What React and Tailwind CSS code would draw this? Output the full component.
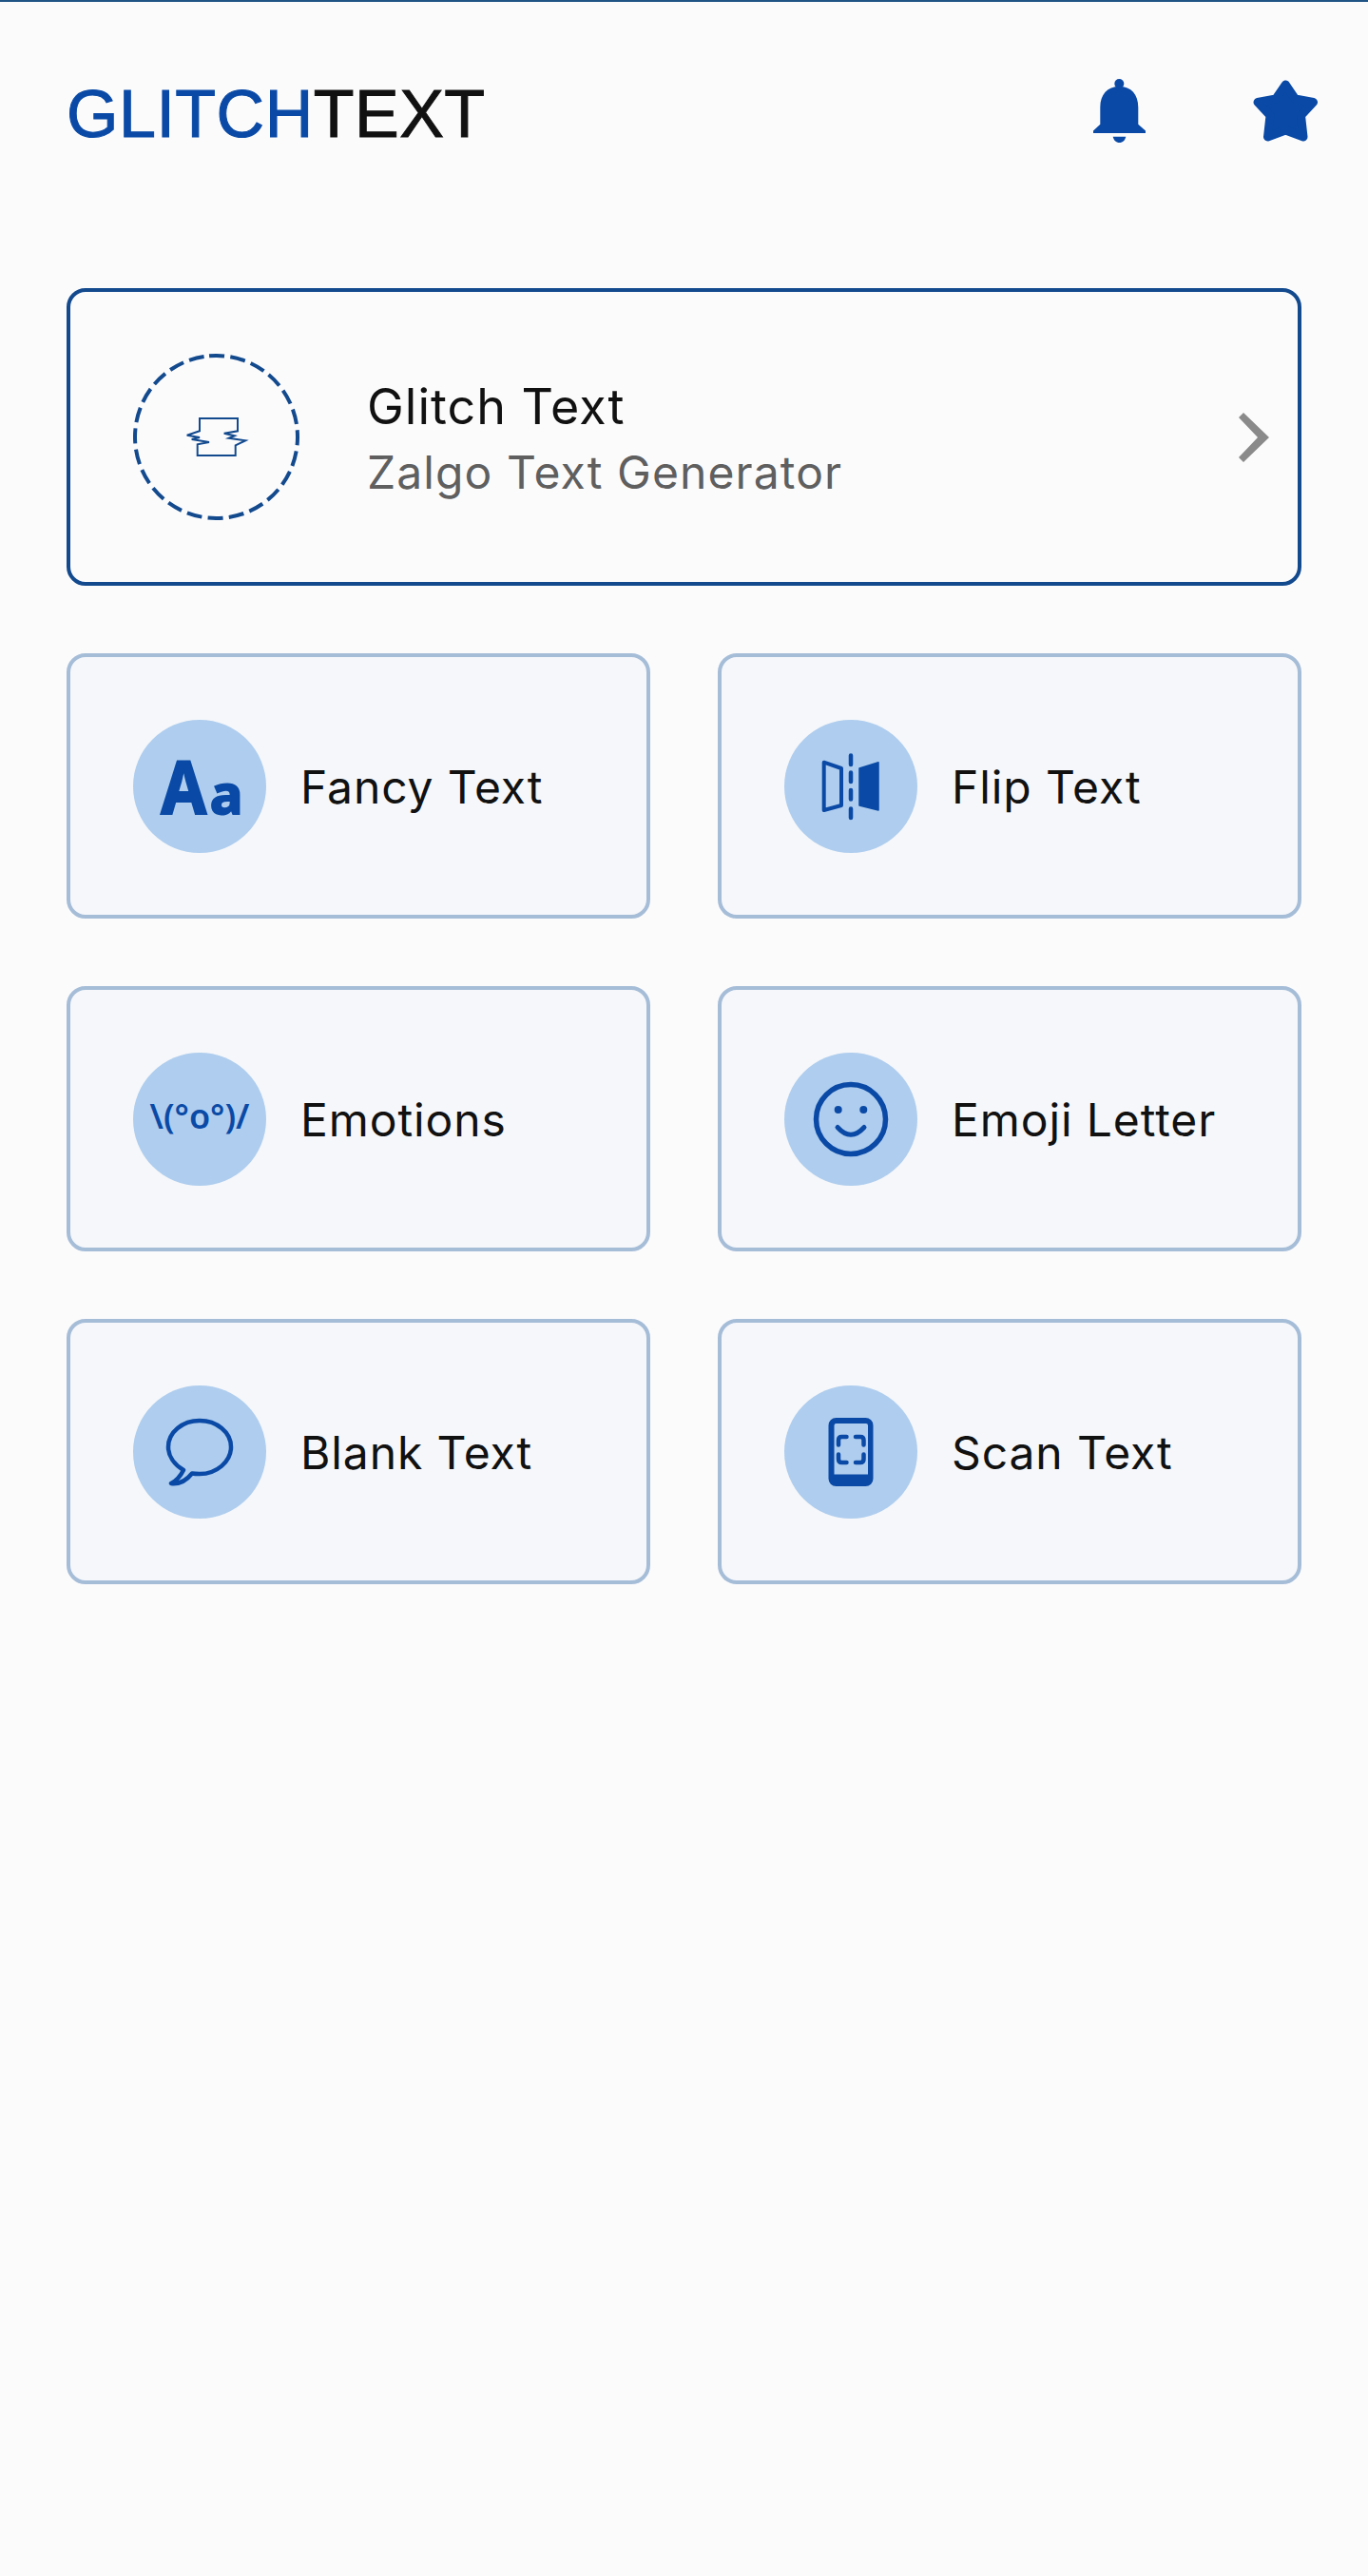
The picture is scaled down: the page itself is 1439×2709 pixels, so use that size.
const BLUE = '#0a4aa6'

const AaIcon = () => (
    <div className="flex items-baseline justify-center font-['Noto_Sans',sans-serif] font-bold leading-none text-[#0a4aa6] [-webkit-text-stroke:2px_#0a4aa6]">
        <span className="inline-block origin-right scale-x-[0.9] text-[77px]">A</span>
        <span className="ml-[3px] text-[58px]">a</span>
    </div>
)

const FlipIcon = () => (
    <svg width="140" height="140" viewBox="0 0 140 140" fill="none">
        <path d="M41.7 44.7L60 51V90L41.7 95Z" stroke={BLUE} strokeWidth="4" strokeLinejoin="round" />
        <path d="M79 51L99 44.7V95L79 90Z" fill={BLUE} stroke={BLUE} strokeWidth="1.5" strokeLinejoin="round" />
        <path d="M70 37.5V47M70 55.5V65M70 74V83.5M70 93.5V103" stroke={BLUE} strokeWidth="4.5" strokeLinecap="round" />
    </svg>
)

const KaomojiIcon = () => (
    <span className="mb-[5px] font-['Noto_Sans',sans-serif] text-[36px] font-semibold leading-none text-[#0a4aa6]">\(°o°)/</span>
)

const SmileIcon = () => (
    <svg width="140" height="140" viewBox="0 0 140 140" fill="none">
        <circle cx="70" cy="70" r="36.5" stroke={BLUE} strokeWidth="5.5" />
        <circle cx="56.7" cy="60" r="4" fill={BLUE} />
        <circle cx="83.3" cy="60" r="4" fill={BLUE} />
        <path d="M56 78.5Q70 94 84 78.5" stroke={BLUE} strokeWidth="5" strokeLinecap="round" />
    </svg>
)

const BubbleIcon = () => (
    <svg width="140" height="140" viewBox="0 0 140 140" fill="none">
        <path
            d="M62 92.5C65 93 68 93 70 93C88 93 103 80 103 64.7C103 49 88 37 70 37C52 37 37 49 37 64.7C37 74 43 83 53 89C50 95 46 100 40 103C48 104 56 100 62 92.5Z"
            stroke={BLUE}
            strokeWidth="4.5"
            strokeLinejoin="round"
        />
    </svg>
)

const ScanIcon = () => (
    <svg width="140" height="140" viewBox="0 0 140 140" fill="none">
        <path
            fillRule="evenodd"
            d="M54.5 34H85.5A8 8 0 0 1 93.5 42V98A8 8 0 0 1 85.5 106H54.5A8 8 0 0 1 46.5 98V42A8 8 0 0 1 54.5 34ZM54.5 40A2 2 0 0 0 52.5 42V93.5H88V42A2 2 0 0 0 86 40Z"
            fill={BLUE}
        />
        <path
            d="M57 62.5V57.5Q57 54 60.5 54H65.5M75 54H80Q83.5 54 83.5 57.5V62.5M83.5 72.5V77.5Q83.5 81 80 81H75M65.5 81H60.5Q57 81 57 77.5V72.5"
            stroke={BLUE}
            strokeWidth="4.5"
            strokeLinecap="round"
        />
    </svg>
)

const TOOLS = [
    { label: 'Fancy Text', icon: <AaIcon /> },
    { label: 'Flip Text', icon: <FlipIcon /> },
    { label: 'Emotions', icon: <KaomojiIcon /> },
    { label: 'Emoji Letter', icon: <SmileIcon /> },
    { label: 'Blank Text', icon: <BubbleIcon /> },
    { label: 'Scan Text', icon: <ScanIcon /> },
]

const App = () => {
    return (
        <div className="min-h-screen border-t-2 border-[#1f5485] bg-[#fbfbfc] font-['Inter',sans-serif]">
            <header className="flex h-[236px] items-center justify-between pl-[70px] pr-[52px]">
                <h1 className="font-['Liberation_Sans',sans-serif] text-[70px] font-normal leading-none tracking-[0.5px] text-[#111] [-webkit-text-stroke:1px_currentColor]">
                    <span className="text-[#0a4aa6]">GLITCH</span>TEXT
                </h1>
                <div className="mb-[6px] flex items-center gap-[113px]">
                    <svg width="55" height="68" viewBox="0 0 55 68" fill={BLUE}>
                        <circle cx="27.3" cy="5" r="5" />
                        <path d="M7.3 30C7.3 16 15 8 27.3 8C40 8 47.3 16 47.3 30V47.7L55 54.5V57H0V54.5L7.3 47.7Z" />
                        <path d="M20.7 60.7H34.3C33.5 64.5 31 67 27.5 67C24 67 21.5 64.5 20.7 60.7Z" />
                    </svg>
                    <svg width="69" height="66" viewBox="0 0 69 66" fill={BLUE} stroke={BLUE} strokeWidth="9" strokeLinejoin="round">
                        <path d="M34.3 5L44.5 20L63.5 23.5L50.5 37.5L53 60L34.3 53L15.5 60L18 37.5L5 23.5L24 20Z" />
                    </svg>
                </div>
            </header>

            <main className="mt-[65px] px-[70px]">
                <div className="flex h-[313px] items-center rounded-[20px] border-4 border-[#134a8e] pl-[66px] pr-[30px]">
                    <svg className="shrink-0" width="175" height="175" viewBox="0 0 175 175" fill="none">
                        <circle
                            cx="87.5"
                            cy="87.5"
                            r="85.5"
                            stroke="#134a8e"
                            strokeWidth="4"
                            strokeDasharray="16 6.38"
                            transform="rotate(-95 87.5 87.5)"
                        />
                        <path
                            d="M70 68H110V81.3L95.7 83.7L106.7 86.3L100.7 88.7L118.3 91.3L107.7 96.3V107H67.7V95.3L80 93L61.7 90L70 88L56.7 85.7L70 81.3Z"
                            stroke="#134a8e"
                            strokeWidth="2"
                        />
                    </svg>
                    <div className="ml-[71px] flex-1">
                        <p className="text-[52px] leading-[74px] tracking-[1px] text-[#111]">Glitch Text</p>
                        <p className="text-[48px] leading-[64px] tracking-[1.1px] text-[#5f5f5f]">Zalgo Text Generator</p>
                    </div>
                    <svg width="32" height="52" viewBox="0 0 32 52" fill="#8a8a8a">
                        <path d="M0 5L5 0L32 26L5 52L0 47L20 26Z" />
                    </svg>
                </div>

                <div className="mt-[71px] grid grid-cols-2 gap-[71px]">
                    {TOOLS.map((tool) => (
                        <div key={tool.label} className="flex h-[279px] items-center rounded-[20px] border-4 border-[#a6bdd8] bg-[#f5f7fa] pl-[66px]">
                            <div className="flex h-[140px] w-[140px] shrink-0 items-center justify-center rounded-full bg-[#afcdee]">
                                {tool.icon}
                            </div>
                            <span className="ml-[36px] pt-[2px] text-[48px] leading-none tracking-[0.9px] text-[#111]">{tool.label}</span>
                        </div>
                    ))}
                </div>
            </main>
        </div>
    )
}

export default App
